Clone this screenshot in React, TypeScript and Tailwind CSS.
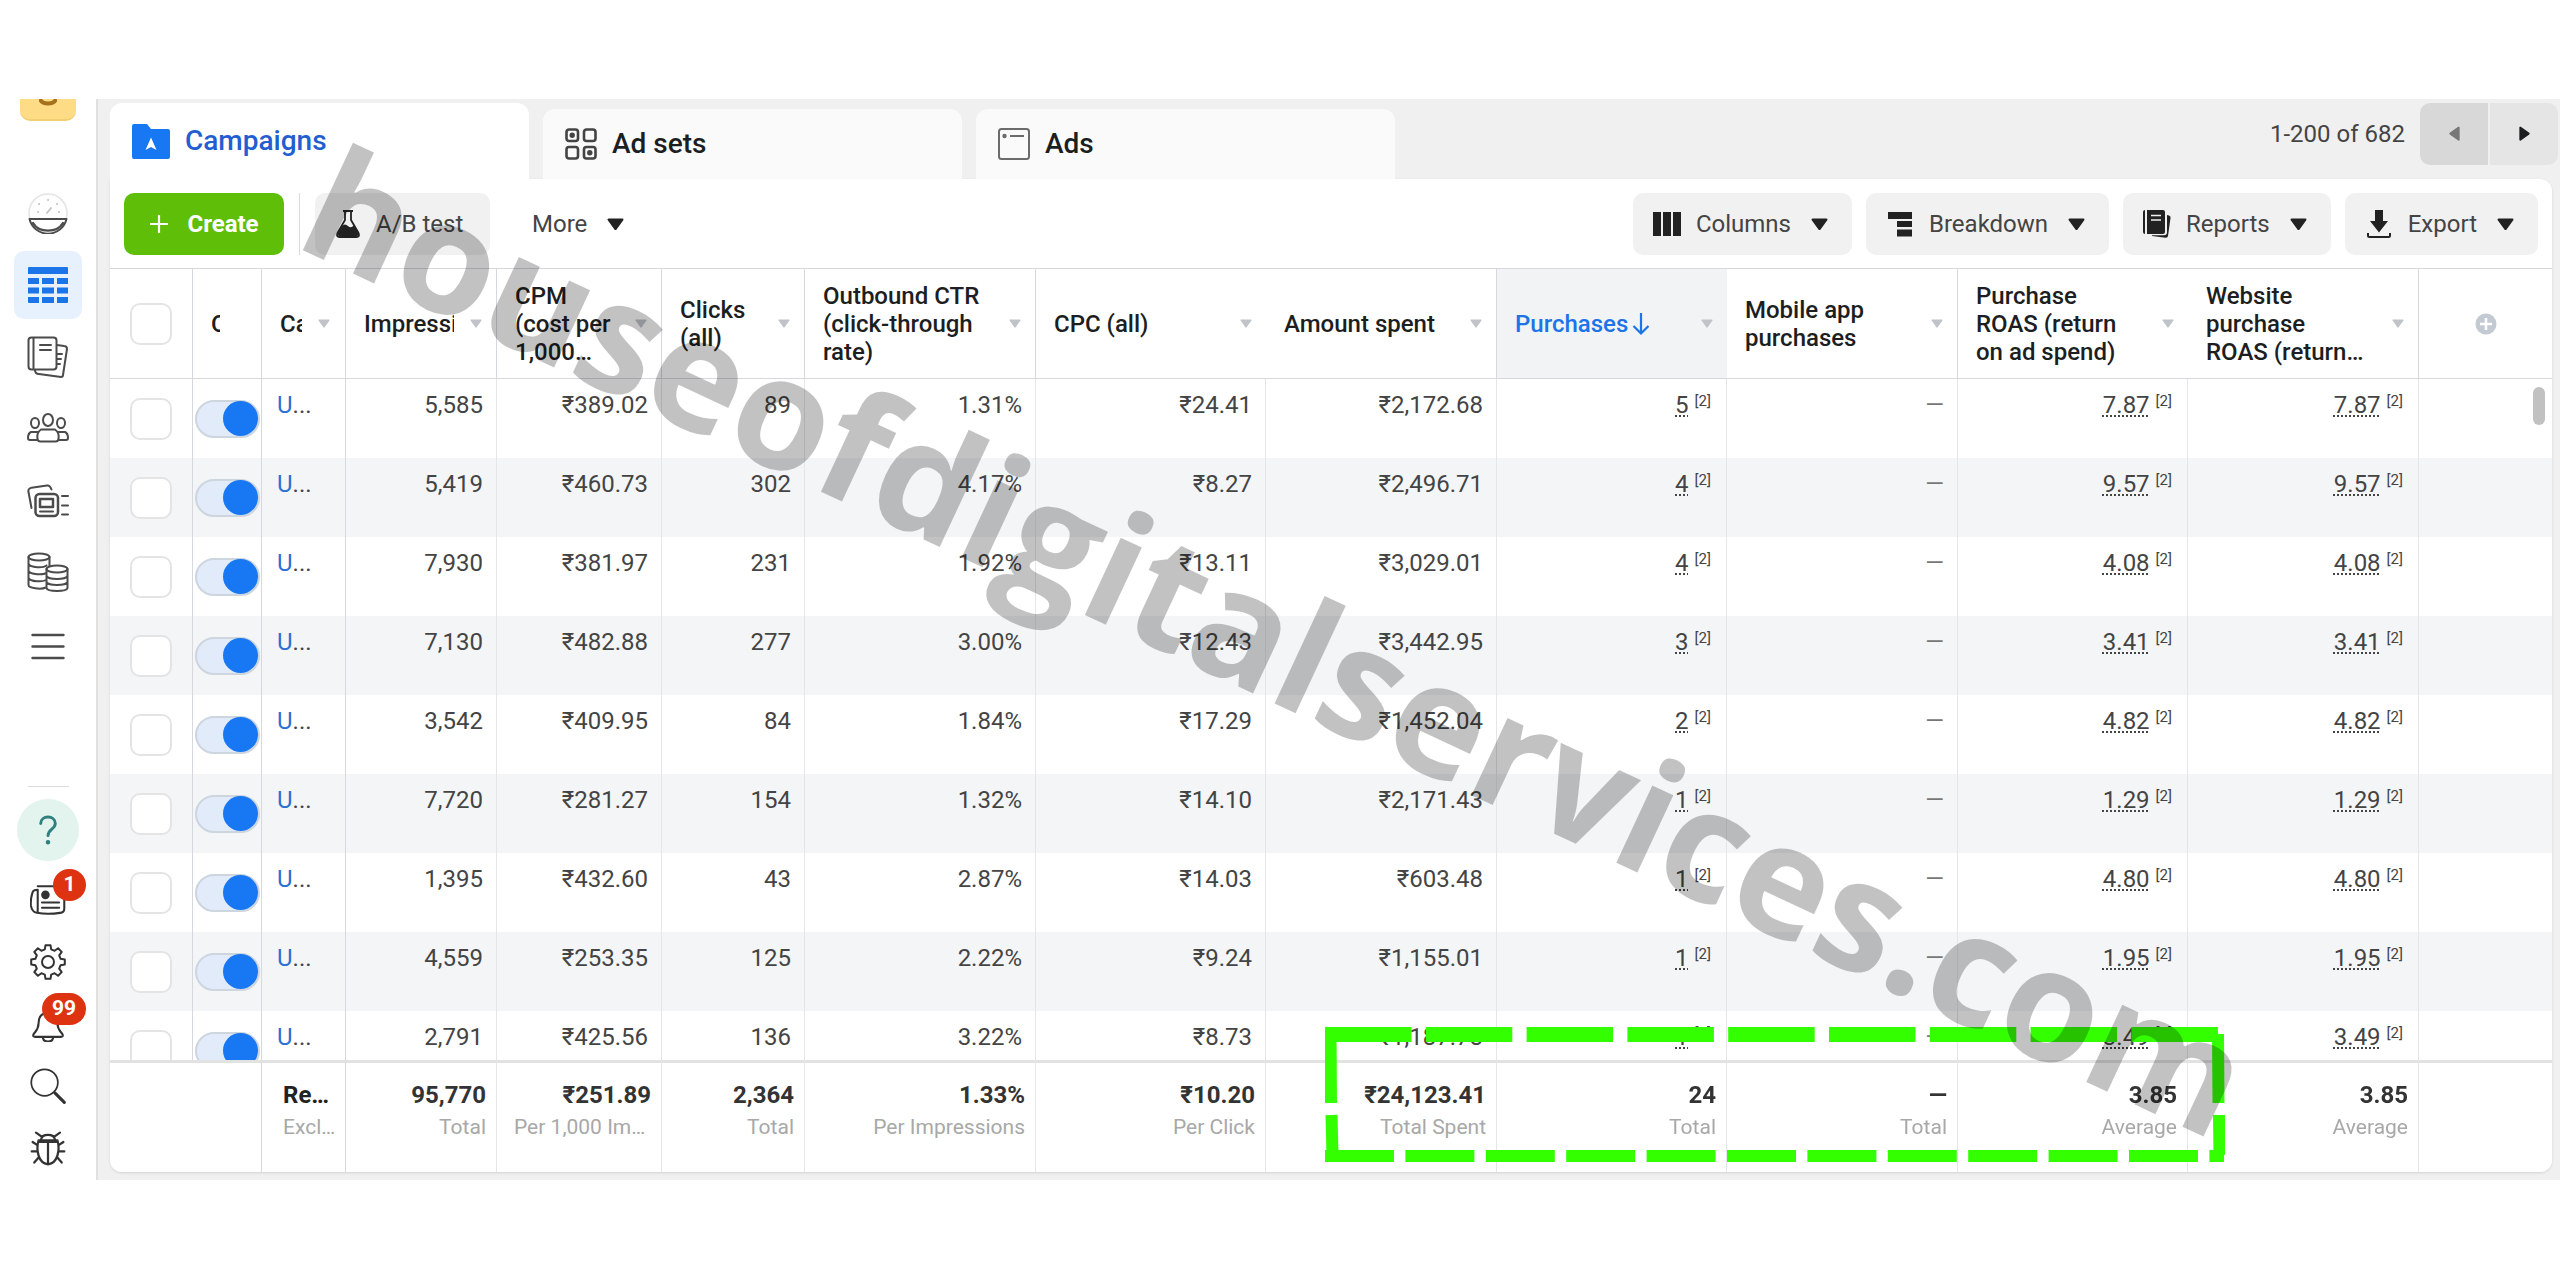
import type { ReactNode } from 'react';
import clsx from 'clsx';

type Column = {
  label: string;
  width: number;
  divider?: boolean;
  sorted?: boolean;
  total: string;
  note: string;
};

const columns: Column[] = [
  { label: 'Impressions', width: 151, divider: true, total: '95,770', note: 'Total' },
  { label: 'CPM (cost per 1,000 impressions)', width: 165, divider: true, total: '₹251.89', note: 'Per 1,000 Impressions' },
  { label: 'Clicks (all)', width: 143, divider: true, total: '2,364', note: 'Total' },
  { label: 'Outbound CTR (click-through rate)', width: 231, divider: true, total: '1.33%', note: 'Per Impressions' },
  { label: 'CPC (all)', width: 230, total: '₹10.20', note: 'Per Click' },
  { label: 'Amount spent', width: 231, divider: true, total: '₹24,123.41', note: 'Total Spent' },
  { label: 'Purchases', width: 230, sorted: true, total: '24', note: 'Total' },
  { label: 'Mobile app purchases', width: 231, divider: true, total: '—', note: 'Total' },
  { label: 'Purchase ROAS (return on ad spend)', width: 230, total: '3.85', note: 'Average' },
  { label: 'Website purchase ROAS (return on ad spend)', width: 231, divider: true, total: '3.85', note: 'Average' },
];

// impressions, cpm, clicks, ctr, cpc, spent, purchases, roas
const rows = [
  ['5,585', '₹389.02', '89', '1.31%', '₹24.41', '₹2,172.68', '5', '7.87'],
  ['5,419', '₹460.73', '302', '4.17%', '₹8.27', '₹2,496.71', '4', '9.57'],
  ['7,930', '₹381.97', '231', '1.92%', '₹13.11', '₹3,029.01', '4', '4.08'],
  ['7,130', '₹482.88', '277', '3.00%', '₹12.43', '₹3,442.95', '3', '3.41'],
  ['3,542', '₹409.95', '84', '1.84%', '₹17.29', '₹1,452.04', '2', '4.82'],
  ['7,720', '₹281.27', '154', '1.32%', '₹14.10', '₹2,171.43', '1', '1.29'],
  ['1,395', '₹432.60', '43', '2.87%', '₹14.03', '₹603.48', '1', '4.80'],
  ['4,559', '₹253.35', '125', '2.22%', '₹9.24', '₹1,155.01', '1', '1.95'],
  ['2,791', '₹425.56', '136', '3.22%', '₹8.73', '₹1,187.78', '1', '3.49'],
];

function Caret({ className }: { className?: string }) {
  return (
    <svg viewBox="0 0 16 12" className={clsx('shrink-0', className)} fill="currentColor" stroke="currentColor" strokeWidth="2" strokeLinejoin="round">
      <path d="M1.500 1.500h13L8 10.500z" />
    </svg>
  );
}

function Icon({ children, className = 'size-[42px]' }: { children: ReactNode; className?: string }) {
  return (
    <svg viewBox="0 0 42 42" className={className} fill="none" stroke="currentColor" strokeWidth="2" strokeLinecap="round" strokeLinejoin="round">
      {children}
    </svg>
  );
}

const gearPath = (() => {
  const points: string[] = [];
  for (let i = 0; i < 8; i++) {
    const base = (i * Math.PI) / 4;
    for (const [offset, r] of [[-0.25, 13], [-0.15, 17], [0.15, 17], [0.25, 13]]) {
      points.push(`${(21 + r * Math.sin(base + offset)).toFixed(1)} ${(21 - r * Math.cos(base + offset)).toFixed(1)}`);
    }
  }
  return `M${points.join('L')}Z`;
})();

function NavLink({ label, active, children }: { label: string; active?: boolean; children: ReactNode }) {
  return (
    <a href="#" aria-label={label} className="flex h-[72px] w-full items-center justify-center text-[#4b4b4b]">
      <span className={clsx('flex size-[68px] items-center justify-center rounded-[10px]', active && 'bg-[#e7f0fd] text-[#1b74e8]')}>
        {children}
      </span>
    </a>
  );
}

function Tool({ label, badge, children }: { label: string; badge?: string; children: ReactNode }) {
  return (
    <button type="button" aria-label={label} className="relative flex h-[62px] w-full items-center justify-center text-[#333]">
      {children}
      {badge && (
        <span className="absolute top-0 right-[10px] flex h-8 min-w-[33px] items-center justify-center rounded-full bg-[#dd3311] px-[10px] text-[21px] font-bold text-white">
          {badge}
        </span>
      )}
    </button>
  );
}

function Sidebar() {
  return (
    <nav className="flex w-[98px] shrink-0 flex-col items-center border-r-2 border-[#e0e0e0] bg-white">
      <div className="flex h-[22px] w-[56px] items-start justify-center overflow-hidden rounded-b-[10px] border-b-2 border-[#f0cf74] bg-[#fddc85]">
        <svg viewBox="0 0 18 8" className="h-2 w-[18px]" fill="none" stroke="#a5711c" strokeWidth="4">
          <path d="M1 0c2 6 14 6 16 0" />
        </svg>
      </div>
      <div className="mt-14 w-full">
        <NavLink label="Account overview">
          <Icon>
            <circle cx="21" cy="21" r="19" stroke="#e4e4e4" strokeWidth="1.600" />
            <path d="M2.500 27a19 19 0 0 0 37 0z" fill="#fff" />
            <path d="M6 31a16.500 13 0 0 0 30 0" strokeWidth="2.400" />
            <path d="M20 21l4-5M11 20h.1M12 12h.1M21 8h.1M30 12h.1M32 20h.1" stroke="#c4c4c4" />
          </Icon>
        </NavLink>
        <NavLink label="Campaigns" active>
          <svg viewBox="0 0 40 36" className="h-9 w-10" fill="currentColor">
            <path d="M1 0h38q1 0 1 1v6H0V1q0-1 1-1zM0 11h11v6H0zM14 11h12v6H14zM29 11h11v6H29zM0 20.500h11v6H0zM14 20.500h12v6H14zM29 20.500h11v6H29zM0 30h11v6H1q-1 0-1-1zM14 30h12v6H14zM29 30h11v5q0 1-1 1H29z" />
          </svg>
        </NavLink>
        <NavLink label="Ads reporting">
          <Icon>
            <rect x="1.500" y="1.500" width="28" height="32" rx="3" />
            <path d="M6.500 2v31M13 9h11M13 14h11M8 34c0 3 2 4 4 4l22 3c1 0 2 0 2-2l4-26c0-2-1-3-3-3l-7-1M30 18h5M30 23h4M30 28h3" />
          </Icon>
        </NavLink>
        <NavLink label="Audiences">
          <Icon>
            <ellipse cx="21" cy="12" rx="5" ry="6" />
            <ellipse cx="8" cy="15" rx="4" ry="5" />
            <ellipse cx="34" cy="15" rx="4" ry="5" />
            <path d="M14 21.500h14c3 2 4 6 3.500 9 0 2-1 3-3 3h-15c-2 0-3-1-3-3-.5-3 .5-7 3.500-9zM11 24H4c-2 1-3 4-3 6 0 1 .5 2 2 2h7M31 24h7c2 1 3 4 3 6 0 1-.5 2-2 2h-7" />
          </Icon>
        </NavLink>
        <NavLink label="Creative hub">
          <Icon>
            <rect x="8.500" y="14" width="22.500" height="22" rx="4" strokeWidth="2.500" />
            <rect x="13" y="19" width="13" height="8" strokeWidth="2.500" />
            <path d="M13 31.500h13M35 16h6M35 25.500h6M35 34.500h6M4.500 28L1.500 12c-.5-2 .5-4 3-4.300L20 5.500c2-.3 3.500 1 4.500 4" />
          </Icon>
        </NavLink>
        <NavLink label="Billing">
          <Icon>
            <ellipse cx="12" cy="5" rx="10.500" ry="3.500" />
            <ellipse cx="30" cy="17" rx="10.500" ry="3.500" />
            <path d="M1.500 5v28c0 3 12 5 17.500 2.500M22.500 5v9M1.500 12c2 4 15 4 18 1.500M1.500 19c2 4 15 4 17.500 2M1.500 26c2 4 14 4 17.500 2M19.500 17v19c1 4 20 4 21 0V17M19.500 24c2 4 19 4 21 0M19.500 30c2 4 19 4 21 0" />
          </Icon>
        </NavLink>
        <NavLink label="All tools">
          <Icon>
            <path d="M5.500 11h31M5.500 22.500h31M5.500 34h31" strokeWidth="2.400" />
          </Icon>
        </NavLink>
      </div>
      <hr className="mt-[105px] w-[41px] border-[#dcdcdc]" />
      <button type="button" aria-label="Help" className="mt-3 mb-2 flex size-[62px] shrink-0 items-center justify-center rounded-full bg-[#e3f3ee] text-[#2f807f]">
        <Icon className="size-[34px]">
          <path d="M12 13c0-5 4-8 9-8s9 3 9 8c0 7-9 7-9 15" strokeWidth="3.600" />
          <circle cx="21" cy="36" r="1.800" fill="currentColor" />
        </Icon>
      </button>
      <Tool label="News" badge="1">
        <Icon className="size-9">
          <path d="M9 5h26q5 0 5 5v21q0 5-5 5-14 2-27 0-6-1-7-9-.5-8 2-15 1-3 6-3v26M14 24h20M14 30h20" strokeWidth="2.400" />
          <circle cx="18" cy="15" r="4" fill="currentColor" />
        </Icon>
      </Tool>
      <Tool label="Settings">
        <Icon className="size-[42px]">
          <path d={gearPath} />
          <circle cx="21" cy="21" r="6" />
        </Icon>
      </Tool>
      <Tool label="Notifications" badge="99">
        <Icon className="size-9">
          <path d="M4 33c3-4 6-6 6-13C10 12 14 8 21 8s11 4 11 12c0 7 3 9 6 13q1 3-2 3H6q-3 0-2-3zM15 37c1 6 11 6 12 0" strokeWidth="2.400" />
        </Icon>
      </Tool>
      <Tool label="Search">
        <Icon className="size-9">
          <circle cx="17" cy="17" r="15.500" />
          <path d="M29 29l11 11" strokeWidth="3.600" />
        </Icon>
      </Tool>
      <Tool label="Report a problem">
        <Icon className="size-9">
          <path d="M10 12h22c3 10 1 27-11 28C9 39 7 22 10 12zM10 14h22M21 14v26M13 11c1-7 15-7 16 0M14 8L7 3M28 8l7-5M9 18l-6-4M8 25H2M10 32l-5 6M33 18l6-4M34 25h6M32 32l5 6" strokeWidth="2.600" />
        </Icon>
      </Tool>
    </nav>
  );
}

function Tabs() {
  return (
    <div className="flex items-end gap-[14px] pt-1">
      <a href="#" className="flex h-[76px] w-[419px] items-center gap-[15px] rounded-t-xl bg-white pl-[22px] text-[28px] font-medium text-[#1f5fd0]">
        <svg viewBox="0 0 38 36" className="h-9 w-[38px]">
          <path d="M2 1h13l4 5h17q2 0 2 2v26q0 2-2 2H2q-2 0-2-2V3q0-2 2-2z" fill="#1877f2" />
          <path d="M19 14.500l5.500 12.500L19 24l-5.500 3z" fill="#fff" />
        </svg>
        Campaigns
      </a>
      <a href="#" className="flex h-[70px] w-[419px] items-center gap-[15px] rounded-t-xl bg-[#fafafa] pl-[22px] text-[28px] font-medium text-[#1c1e21]">
        <svg viewBox="0 0 32 32" className="size-8" fill="none" stroke="#444" strokeWidth="2.600">
          <rect x="1.500" y="1.500" width="11.500" height="11.500" rx="2.500" />
          <rect x="19" y="1.500" width="11.500" height="11.500" rx="2.500" />
          <rect x="1.500" y="19" width="11.500" height="11.500" rx="2.500" />
          <rect x="19" y="19" width="11.500" height="11.500" rx="2.500" />
          <circle cx="7.200" cy="7.200" r="1.400" fill="#444" />
          <circle cx="24.800" cy="24.800" r="1.400" fill="#444" />
        </svg>
        Ad sets
      </a>
      <a href="#" className="flex h-[70px] w-[419px] items-center gap-[15px] rounded-t-xl bg-[#fafafa] pl-[22px] text-[28px] font-medium text-[#1c1e21]">
        <svg viewBox="0 0 32 32" className="size-8" fill="none" stroke="#6b6b6b" strokeWidth="2">
          <rect x="1" y="1" width="30" height="30" rx="2.500" />
          <path d="M12 8h14" />
          <circle cx="6.500" cy="8" r="1.200" fill="#6b6b6b" />
        </svg>
        Ads
      </a>
      <div className="mb-[14px] ml-auto flex items-center gap-[2px] self-end pr-[2px]">
        <span className="pr-[13px] text-[24px] text-[#444]">1-200 of 682</span>
        <button type="button" aria-label="Previous page" disabled className="flex h-[62px] w-[68px] items-center justify-center rounded-l-[10px] bg-[#d8d8d8] text-[#777]">
          <Caret className="w-[15px] rotate-90" />
        </button>
        <button type="button" aria-label="Next page" className="flex h-[62px] w-[68px] items-center justify-center rounded-r-[10px] bg-[#e5e5e5] text-[#1c1e21]">
          <Caret className="w-[15px] -rotate-90" />
        </button>
      </div>
    </div>
  );
}

function MenuButton({ label, children }: { label: string; children: ReactNode }) {
  return (
    <button type="button" className="flex h-[62px] items-center rounded-[10px] bg-[#f1f1f1] pr-6 pl-5 text-[24px] text-[#444]">
      <svg viewBox="0 0 28 28" className="mr-[15px] size-7 text-[#222]" fill="currentColor">{children}</svg>
      {label}
      <Caret className="ml-5 w-[17px] text-[#222]" />
    </button>
  );
}

function Toolbar() {
  return (
    <div className="flex items-center border-b border-[#d5d8dc] px-[14px] pt-[14px] pb-[13px]">
      <button type="button" className="flex h-[62px] w-40 items-center justify-center gap-[18px] rounded-[10px] bg-[#5fbf08] text-[24px] font-bold text-white">
        <svg viewBox="0 0 20 20" className="size-5" stroke="currentColor" strokeWidth="2.200">
          <path d="M10 1v18M1 10h18" />
        </svg>
        Create
      </button>
      <div className="mx-[15px] h-[62px] w-px bg-[#dadada]" />
      <button type="button" className="flex h-[62px] w-[175px] items-center gap-4 rounded-[10px] bg-[#f1f1f1] pl-[21px] text-[24px] text-[#444]">
        <svg viewBox="0 0 24 28" className="h-7 w-6" fill="none" stroke="#222" strokeWidth="1.800">
          <path d="M7 1h10M9 1v9L1.500 23q-1.500 4 2 4h17q3.500 0 2-4L15 10V1" />
          <path d="M6 16q3-3 6 0t6-1l4.500 8q1 3-2 3h-17q-3 0-2-3z" fill="#222" stroke="none" />
        </svg>
        A/B test
      </button>
      <button type="button" className="flex h-[62px] items-center gap-5 pl-[42px] text-[24px] text-[#444]">
        More
        <Caret className="w-[17px] text-[#222]" />
      </button>
      <div className="ml-auto flex gap-[14px]">
        <MenuButton label="Columns">
          <path d="M0 2h8v24H0zM10 2h8v24h-8zM20 2h8v24h-8z" />
        </MenuButton>
        <MenuButton label="Breakdown">
          <path d="M2 2h24v7H2zM11 11h15v6H11zM11 19.500h15v7H11z" />
        </MenuButton>
        <MenuButton label="Reports">
          <path d="M0 2q0-2 2-2v24q-2 0-2-2zM4 0h16q2 0 2 2v20q0 2-2 2H4zM24 5l2 .5q2 .500 1.500 2.500L25 26q-.5 2-2.500 1.700L9 26v-.800h12q3 0 3-3z" />
          <path d="M8 5.500h10M8 10h10" stroke="#f1f1f1" strokeWidth="1.500" />
        </MenuButton>
        <MenuButton label="Export">
          <path d="M10 0h8v11h5l-9 11.500L5 11h5z" />
          <path d="M3 23v2.500q0 1.500 1.500 1.500h19q1.500 0 1.500-1.500V23" fill="none" stroke="currentColor" strokeWidth="2" />
        </MenuButton>
      </div>
    </div>
  );
}

function CheckBox({ label }: { label: string }) {
  return (
    <input type="checkbox" aria-label={label} className="block size-[42px] appearance-none rounded-[10px] border-2 border-[#e4e4e4] bg-white checked:bg-blue-500" />
  );
}

function Value({ children }: { children: string }) {
  return (
    <span className="inline-flex items-start gap-[6px] pr-[2px]">
      <span className="underline decoration-dotted decoration-2 underline-offset-2">{children}</span>
      <span className="text-[15px] leading-5">[2]</span>
    </span>
  );
}

function CampaignTable() {
  const cell = 'h-[79px] border-r border-[#e4e6e9] pt-3 pr-[13px] text-right align-top leading-7';
  return (
    <div className="relative">
      <div className="max-h-[903px] overflow-hidden rounded-b-xl">
        <table className="w-full table-fixed border-separate border-spacing-0 text-[24px] text-[#444]">
          <colgroup>
            <col style={{ width: 83 }} />
            <col style={{ width: 69 }} />
            <col style={{ width: 84 }} />
            {columns.map((c) => <col key={c.label} style={{ width: c.width }} />)}
            <col style={{ width: 133 }} />
          </colgroup>
          <thead>
            <tr className="h-[110px] text-left leading-7 text-[#1c1e21]">
              <th className="border-r border-b border-[#d5d8dc] pl-5"><CheckBox label="Select all campaigns" /></th>
              <th className="border-r border-b border-[#d5d8dc] pl-[18px] font-medium">
                <div className="w-[9px] overflow-hidden">Off/On</div>
              </th>
              <th className="border-r border-b border-[#d5d8dc] pr-[15px] pl-[18px] font-medium">
                <div className="flex items-center gap-4">
                  <span className="flex-1 overflow-hidden">Campaign</span>
                  <Caret className="w-3 text-[#c0c4c9]" />
                </div>
              </th>
              {columns.map((c) => (
                <th
                  key={c.label}
                  className={clsx('border-b border-[#d5d8dc] pr-[14px] pl-[18px] font-medium', c.divider && 'border-r', c.sorted && 'bg-[#f1f3f5] text-[#1b74e8]')}
                >
                  <div className="flex items-center gap-4">
                    <span className={clsx('flex-1 overflow-hidden pr-[6px]', c.sorted ? 'flex items-center gap-1' : 'line-clamp-3')}>
                      {c.label}
                      {c.sorted && (
                        <svg viewBox="0 0 18 24" className="h-6 w-[18px]" fill="none" stroke="currentColor" strokeWidth="2.200">
                          <path d="M9 1v20M1.500 14L9 21.500l7.500-7.500" />
                        </svg>
                      )}
                    </span>
                    <Caret className="w-3 text-[#c0c4c9]" />
                  </div>
                </th>
              ))}
              <th className="border-b border-[#d5d8dc]">
                <button type="button" aria-label="Add column" className="mx-auto block">
                  <svg viewBox="0 0 22 22" className="size-[22px]">
                    <circle cx="11" cy="11" r="10.500" fill="#c3cad2" />
                    <path d="M11 5v12M5 11h12" stroke="#fff" strokeWidth="2.500" />
                  </svg>
                </button>
              </th>
            </tr>
          </thead>
          <tbody>
            {rows.map(([impressions, cpm, clicks, ctr, cpc, spent, purchases, roas], i) => (
              <tr key={impressions} className="even:bg-[#f3f5f7]">
                <td className="border-r border-[#d5d8dc] pl-5"><CheckBox label={`Select campaign ${i + 1}`} /></td>
                <td className="border-r border-[#d5d8dc] pl-[2px]">
                  <input
                    type="checkbox"
                    role="switch"
                    defaultChecked
                    aria-label={`Campaign ${i + 1} on`}
                    className="flex h-[38px] w-[65px] appearance-none items-center rounded-full border-2 border-[#cdd5de] bg-[#e1ebfa] before:size-[35px] before:shrink-0 before:rounded-full before:bg-[#1877f2] checked:justify-end"
                  />
                </td>
                <td className="h-[79px] border-r border-[#d5d8dc] pt-3 pl-[15px] align-top leading-7">
                  <a href="#" className="text-[#2d6fd2]">U</a>...
                </td>
                <td className={cell}>{impressions}</td>
                <td className={cell}>{cpm}</td>
                <td className={cell}>{clicks}</td>
                <td className={cell}>{ctr}</td>
                <td className={cell}>{cpc}</td>
                <td className={cell}>{spent}</td>
                <td className={cell}><Value>{purchases}</Value></td>
                <td className={clsx(cell, 'text-[#777]')}>—</td>
                <td className={cell}><Value>{roas}</Value></td>
                <td className={cell}><Value>{roas}</Value></td>
                <td />
              </tr>
            ))}
          </tbody>
          <tfoot className="sticky bottom-0 bg-white">
            <tr className="h-[112px] align-top [&>td]:border-t-[3px] [&>td]:border-t-[#e2e2e2]">
              <td colSpan={2} className="border-r border-[#d5d8dc]" />
              <td className="border-r border-[#d5d8dc] pt-4 pr-1 pl-[21px]">
                <div className="truncate leading-8 font-bold text-[#222]">Results</div>
                <div className="truncate text-[21px] leading-8 text-[#a8a8a8]">Excludes deleted items</div>
              </td>
              {columns.map((c) => (
                <td key={c.label} className="border-r border-[#e4e6e9] pt-4 pr-[10px] pl-[17px] text-right">
                  <div className="leading-8 font-bold text-[#333]">{c.total}</div>
                  <div className="truncate text-[21px] leading-8 text-[#a8a8a8]">{c.note}</div>
                </td>
              ))}
              <td />
            </tr>
          </tfoot>
        </table>
      </div>
      <div className="absolute top-[118px] right-[7px] h-[38px] w-3 rounded-full bg-[#c1c1c1]" />
    </div>
  );
}

// green dashed frame drawn over the totals
function Highlight() {
  return (
    <svg viewBox="0 0 900 136" className="absolute top-[1027px] left-[1325px] h-[136px] w-[900px]" fill="none" stroke="#33ff00">
      <path d="M0 7.500h896" strokeWidth="15" strokeDasharray="86.500 14.300" />
      <path d="M0 129h899" strokeWidth="12" strokeDasharray="69 11.400" />
      <path d="M5.500 7l.5 69M6.500 88l1 40" strokeWidth="12" />
      <path d="M893 7l.5 69M894 88l.5 40" strokeWidth="12" />
    </svg>
  );
}

export default function App() {
  return (
    <div className="relative overflow-hidden bg-white py-[99px] font-['Roboto','Noto_Sans',sans-serif]">
      <div className="flex bg-[#f0f0f0]">
        <Sidebar />
        <main className="min-w-0 flex-1 pb-2 pl-3">
          <Tabs />
          <section className="mr-2 rounded-xl rounded-tl-none bg-white shadow-sm">
            <Toolbar />
            <CampaignTable />
          </section>
        </main>
      </div>
      <Highlight />
      <div className="pointer-events-none absolute top-[120px] left-[350px] origin-top-left rotate-[25deg] font-['Open_Sans',sans-serif] text-[156px] leading-none font-bold whitespace-nowrap text-black/24">
        houseofdigitalservices.com
      </div>
    </div>
  );
}
